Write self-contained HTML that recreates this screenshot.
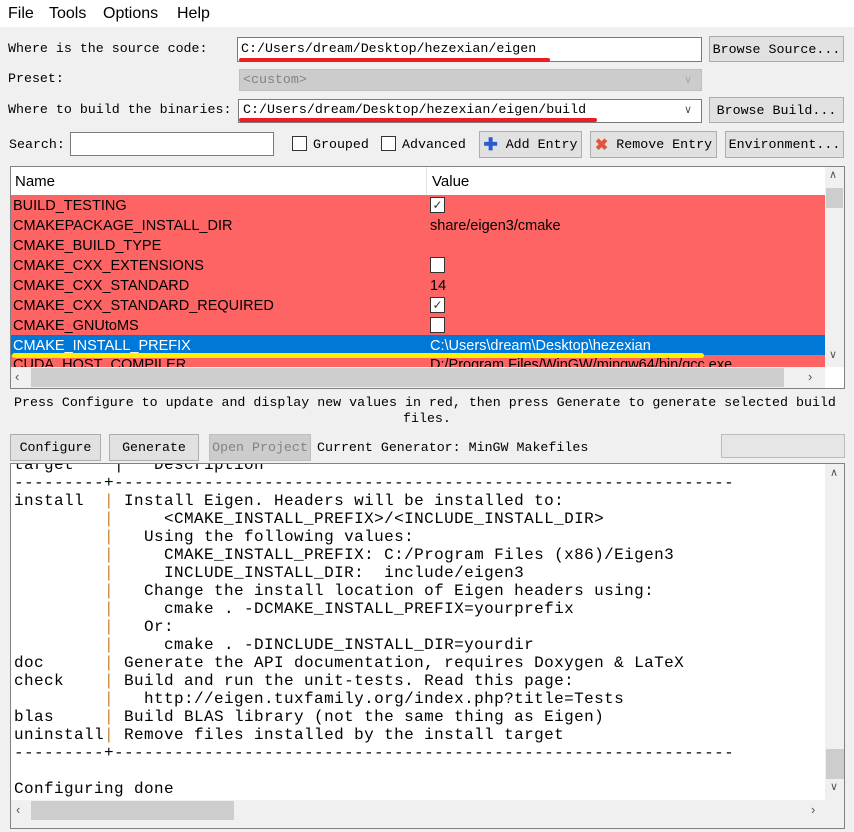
<!DOCTYPE html>
<html><head><meta charset="utf-8"><style>
*{box-sizing:border-box;margin:0;padding:0}
body{width:854px;height:832px;background:#f0f0f0;position:relative;overflow:hidden;font-family:"Liberation Sans",sans-serif;}
.a{position:absolute}
.m{font-family:"Liberation Mono",monospace;font-size:13.3px;color:#000;white-space:pre}
.btn{position:absolute;background:#e1e1e1;border:1px solid #adadad;font-family:"Liberation Mono",monospace;font-size:13.3px;display:flex;align-items:center;justify-content:center;white-space:pre}
.inp{position:absolute;background:#fff;border:1px solid #7a7a7a}
.cb{position:absolute;width:15px;height:15px;background:#fff;border:1px solid #333}
.row{position:absolute;left:11px;width:814px;height:20px;background:#ff6464;font-size:14.5px;line-height:20px;color:#000}
.row span{position:absolute;left:2px;top:1px}
.row b{font-weight:normal;position:absolute;left:419px;top:1px}
.chk{position:absolute;left:419px;top:2px;width:15px;height:16px;background:#fff;border:1px solid #333;font-size:12px;line-height:14px;text-align:center;color:#333}
.out{font-family:"Liberation Mono",monospace;font-size:16px;line-height:18px;letter-spacing:0.4px;white-space:pre;color:#000}
.p{color:#c8802c}
</style></head><body>
<div class="a" style="left:0;top:0;width:854px;height:27px;background:#fff;font-size:16px;line-height:27px">
<span class="a" style="left:8px">File</span><span class="a" style="left:49px">Tools</span><span class="a" style="left:103px">Options</span><span class="a" style="left:177px">Help</span></div>

<div class="a m" style="left:8px;top:41px">Where is the source code:</div>
<div class="inp" style="left:237px;top:37px;width:465px;height:25px"></div>
<div class="a m" style="left:241px;top:41px">C:/Users/dream/Desktop/hezexian/eigen</div>
<div class="a" style="left:239px;top:58px;width:311px;height:4px;background:#ee1c25;border-radius:2px"></div>
<div class="btn" style="left:709px;top:36px;width:135px;height:26px">Browse Source...</div>

<div class="a m" style="left:8px;top:71px">Preset:</div>
<div class="a" style="left:239px;top:69px;width:463px;height:22px;background:#cccccc;border:1px solid #bfbfbf"></div>
<div class="a m" style="left:243px;top:72px;color:#838383">&lt;custom&gt;</div>
<div class="a" style="left:684px;top:73px;color:#aaa;font-size:11px">&#x2228;</div>

<div class="a m" style="left:8px;top:102px">Where to build the binaries:</div>
<div class="inp" style="left:238px;top:99px;width:464px;height:24px"></div>
<div class="a m" style="left:243px;top:102px">C:/Users/dream/Desktop/hezexian/eigen/build</div>
<div class="a" style="left:684px;top:103px;color:#555;font-size:11px">&#x2228;</div>
<div class="a" style="left:239px;top:118px;width:358px;height:4px;background:#ee1c25;border-radius:2px"></div>
<div class="btn" style="left:709px;top:97px;width:135px;height:26px">Browse Build...</div>

<div class="a m" style="left:9px;top:137px">Search:</div>
<div class="inp" style="left:70px;top:132px;width:204px;height:24px"></div>
<div class="cb" style="left:292px;top:136px"></div>
<div class="a m" style="left:313px;top:137px">Grouped</div>
<div class="cb" style="left:381px;top:136px"></div>
<div class="a m" style="left:402px;top:137px">Advanced</div>
<div class="btn" style="left:479px;top:131px;width:103px;height:27px"><span style="color:#2a5bd0;font-weight:bold;font-family:'Liberation Sans';font-size:17px">&#x271A;</span> Add Entry</div>
<div class="btn" style="left:590px;top:131px;width:127px;height:27px"><span style="color:#e0553b;font-weight:bold;font-family:'Liberation Sans';font-size:16px">&#x2716;</span> Remove Entry</div>
<div class="btn" style="left:725px;top:131px;width:119px;height:27px">Environment...</div>

<div class="a" style="left:10px;top:166px;width:835px;height:223px;background:#fff;border:1px solid #828282"></div>
<div class="a" style="left:15px;top:173px;font-size:15px">Name</div>
<div class="a" style="left:426px;top:167px;width:1px;height:28px;background:#e5e5e5"></div>
<div class="a" style="left:432px;top:173px;font-size:15px">Value</div>
<div class="row" style="top:195px"><span>BUILD_TESTING</span><div class="chk">&#x2713;</div></div>
<div class="row" style="top:215px"><span>CMAKEPACKAGE_INSTALL_DIR</span><b>share/eigen3/cmake</b></div>
<div class="row" style="top:235px"><span>CMAKE_BUILD_TYPE</span></div>
<div class="row" style="top:255px"><span>CMAKE_CXX_EXTENSIONS</span><div class="chk"></div></div>
<div class="row" style="top:275px"><span>CMAKE_CXX_STANDARD</span><b>14</b></div>
<div class="row" style="top:295px"><span>CMAKE_CXX_STANDARD_REQUIRED</span><div class="chk">&#x2713;</div></div>
<div class="row" style="top:315px"><span>CMAKE_GNUtoMS</span><div class="chk"></div></div>
<div class="row" style="top:335px;background:#0078d7;color:#fff"><span>CMAKE_INSTALL_PREFIX</span><b>C:\Users\dream\Desktop\hezexian</b></div>
<div class="row" style="top:355px;height:12px;overflow:hidden"><span style="top:0">CUDA_HOST_COMPILER</span><b style="top:0">D:/Program Files/WinGW/mingw64/bin/gcc.exe</b></div>
<div class="a" style="left:12px;top:353px;width:692px;height:5px;background:#ffee00;border-radius:3px"></div>
<div class="a" style="left:825px;top:167px;width:19px;height:200px;background:#f0f0f0"></div>
<div class="a" style="left:826px;top:188px;width:17px;height:20px;background:#cdcdcd"></div>
<div class="a" style="left:829px;top:168px;font-size:11px;color:#555">&#x2227;</div>
<div class="a" style="left:829px;top:348px;font-size:11px;color:#555">&#x2228;</div>
<div class="a" style="left:11px;top:367px;width:814px;height:21px;background:#f0f0f0"></div>
<div class="a" style="left:31px;top:368px;width:753px;height:19px;background:#cdcdcd"></div>
<div class="a" style="left:15px;top:369px;font-size:13px;color:#555">&#x2039;</div>
<div class="a" style="left:808px;top:369px;font-size:13px;color:#555">&#x203A;</div>

<div class="a m" style="left:14px;top:395px">Press Configure to update and display new values in red, then press Generate to generate selected build</div>
<div class="a m" style="left:403px;top:411px">files.</div>

<div class="btn" style="left:10px;top:434px;width:91px;height:27px">Configure</div>
<div class="btn" style="left:109px;top:434px;width:90px;height:27px">Generate</div>
<div class="btn" style="left:209px;top:434px;width:102px;height:27px;background:#cccccc;border-color:#bfbfbf;color:#838383">Open Project</div>
<div class="a m" style="left:317px;top:440px">Current Generator: MinGW Makefiles</div>
<div class="a" style="left:721px;top:434px;width:124px;height:24px;background:#e6e6e6;border:1px solid #bcbcbc"></div>

<div class="a" style="left:10px;top:463px;width:835px;height:366px;background:#fff;border:1px solid #828282;overflow:hidden">
<div class="out a" style="left:3px;top:-8px">target    |   Description
---------+--------------------------------------------------------------
install  <span class="p">|</span> Install Eigen. Headers will be installed to:
         <span class="p">|</span>     &lt;CMAKE_INSTALL_PREFIX&gt;/&lt;INCLUDE_INSTALL_DIR&gt;
         <span class="p">|</span>   Using the following values:
         <span class="p">|</span>     CMAKE_INSTALL_PREFIX: C:/Program Files (x86)/Eigen3
         <span class="p">|</span>     INCLUDE_INSTALL_DIR:  include/eigen3
         <span class="p">|</span>   Change the install location of Eigen headers using:
         <span class="p">|</span>     cmake . -DCMAKE_INSTALL_PREFIX=yourprefix
         <span class="p">|</span>   Or:
         <span class="p">|</span>     cmake . -DINCLUDE_INSTALL_DIR=yourdir
doc      <span class="p">|</span> Generate the API documentation, requires Doxygen &amp; LaTeX
check    <span class="p">|</span> Build and run the unit-tests. Read this page:
         <span class="p">|</span>   http://eigen.tuxfamily.org/index.php?title=Tests
blas     <span class="p">|</span> Build BLAS library (not the same thing as Eigen)
uninstall<span class="p">|</span> Remove files installed by the install target
---------+--------------------------------------------------------------

Configuring done</div>
<div class="a" style="left:814px;top:0;width:20px;height:336px;background:#f0f0f0"></div>
<div class="a" style="left:815px;top:285px;width:18px;height:30px;background:#cdcdcd"></div>
<div class="a" style="left:819px;top:2px;font-size:11px;color:#555">&#x2227;</div>
<div class="a" style="left:819px;top:316px;font-size:11px;color:#555">&#x2228;</div>
<div class="a" style="left:0;top:336px;width:834px;height:28px;background:#f0f0f0"></div>
<div class="a" style="left:20px;top:337px;width:203px;height:19px;background:#cdcdcd"></div>
<div class="a" style="left:5px;top:338px;font-size:13px;color:#555">&#x2039;</div>
<div class="a" style="left:800px;top:338px;font-size:13px;color:#555">&#x203A;</div>
</div>
</body></html>
